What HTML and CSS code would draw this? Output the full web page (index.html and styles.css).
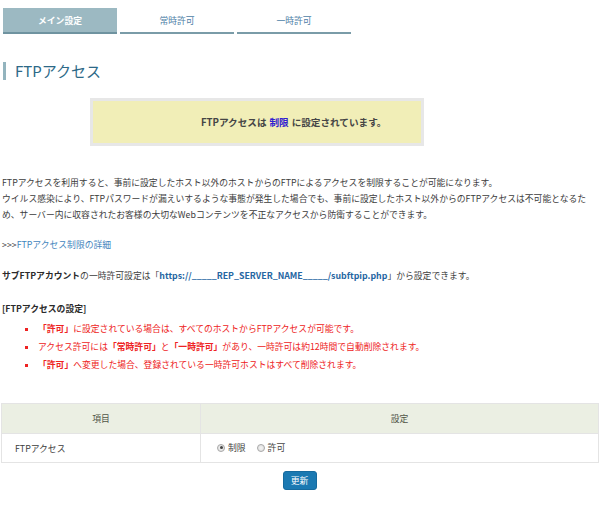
FILE: index.html
```html
<!DOCTYPE html>
<html lang="ja">
<head>
<meta charset="utf-8">
<title>FTPアクセス</title>
<link rel="stylesheet" href="styles.css">
</head>
<body>
<div class="page">
  <nav class="tabs">
    <a class="tab active">メイン設定</a>
    <a class="tab">常時許可</a>
    <a class="tab">一時許可</a>
  </nav>

  <h1 class="title">FTPアクセス</h1>

  <div class="notice">FTPアクセスは <span class="state">制限</span> に設定されています。</div>

  <p class="desc">FTPアクセスを利用すると、事前に設定したホスト以外のホストからのFTPによるアクセスを制限することが可能になります。<br>ウイルス感染により、FTPパスワードが漏えいするような事態が発生した場合でも、事前に設定したホスト以外からのFTPアクセスは不可能となるため、サーバー内に収容されたお客様の大切なWebコンテンツを不正なアクセスから防衛することができます。</p>

  <p class="more">&gt;&gt;&gt;<a class="link">FTPアクセス制限の詳細</a></p>

  <p class="sub"><b>サブFTPアカウント</b>の一時許可設定は「<b class="url">https://_____REP_SERVER_NAME_____/subftpip.php</b>」から設定できます。</p>

  <p class="sec">[FTPアクセスの設定]</p>
  <ul class="notes">
    <li><b>「許可」</b>に設定されている場合は、すべてのホストからFTPアクセスが可能です。</li>
    <li>アクセス許可には<b>「常時許可」</b>と<b>「一時許可」</b>があり、一時許可は約12時間で自動削除されます。</li>
    <li><b>「許可」</b>へ変更した場合、登録されている一時許可ホストはすべて削除されます。</li>
  </ul>

  <table class="form">
    <colgroup><col class="c1"><col class="c2"></colgroup>
    <thead>
      <tr><th>項目</th><th>設定</th></tr>
    </thead>
    <tbody>
      <tr>
        <td class="name">FTPアクセス</td>
        <td class="opts">
          <label class="opt"><input type="radio" name="ftp" checked>制限</label>
          <label class="opt"><input type="radio" name="ftp">許可</label>
        </td>
      </tr>
    </tbody>
  </table>

  <div class="actions"><button class="btn" type="button">更新</button></div>
</div>
</body>
</html>
```

FILE: styles.css
```css
html, body {
  margin: 0;
  padding: 0;
  background: #ffffff;
}
body {
  font-family: "Noto Sans CJK JP", "Noto Sans", sans-serif;
  font-size: 8.8px;
  color: #3c3c3c;
}
.page {
  padding: 8px 2px 0 2px;
}

/* tabs */
.tabs {
  display: flex;
  gap: 3px;
  margin-left: 1px;
}
.tab {
  width: 114px;
  height: 24px;
  box-sizing: content-box;
  border-bottom: 2px solid #7a9ca8;
  display: flex;
  align-items: center;
  justify-content: center;
  color: #4d7ea6;
  font-size: 8.8px;
}
.tab.active {
  background: #9cb9c2;
  color: #ffffff;
  font-weight: bold;
  border-bottom-color: #6f93a0;
}

/* heading */
.title {
  margin: 28px 0 0 1px;
  padding-left: 9px;
  border-left: 3px solid #93b4be;
  font-size: 15px;
  font-weight: normal;
  line-height: 18px;
  color: #2d6987;
  height: 18px;
  display: flex;
  align-items: center;
}

/* notice */
.notice {
  margin: 18px 0 0 88px;
  width: 220px;
  height: 42px;
  padding-left: 108px;
  box-sizing: content-box;
  background: #f1eeb7;
  border: 3px solid #e7e7e7;
  display: flex;
  align-items: center;
  font-size: 9.6px;
  font-weight: bold;
  color: #454545;
}
.state {
  color: #3020d0;
  margin: 0 3px;
}

/* text blocks */
.desc {
  margin: 29px 0 0 0;
  line-height: 16px;
}
.more {
  margin: 14px 0 0 0;
  line-height: 16px;
}
.link {
  color: #3f85bd;
}
.sub {
  margin: 15px 0 0 0;
  line-height: 16px;
}
.sub b {
  color: #2a2a2a;
}
.sub .url {
  color: #2566a2;
}
.sec {
  margin: 17px 0 0 0;
  line-height: 16px;
  font-weight: bold;
  color: #2a2a2a;
}
.notes {
  margin: 3px 0 0 0;
  padding: 0 0 0 36px;
  list-style: square;
  color: #ee2222;
}
.notes li {
  line-height: 18px;
}
.notes li::marker {
  font-size: 9px;
}

/* table */
.form {
  margin: 29px 0 0 -1px;
  width: 598px;
  table-layout: fixed;
  border-collapse: collapse;
  font-size: 8.8px;
}
.form col.c1 {
  width: 199px;
}
.form th, .form td {
  border: 1px solid #e4e4e4;
}
.form th {
  background: #ebefe3;
  height: 29px;
  font-weight: normal;
  color: #4f5446;
  padding: 0;
}
.form td {
  height: 28px;
  padding: 0;
}
.form td.name {
  padding-left: 13px;
}
.form td.opts {
  padding-left: 16px;
}
.opt {
  display: inline-flex;
  align-items: center;
  margin-right: 9px;
  color: #444;
}
.opt input {
  appearance: none;
  -webkit-appearance: none;
  width: 8px;
  height: 8px;
  margin: 0 3px 0 0;
  border: 1px solid #a9a9a9;
  border-radius: 50%;
  background: radial-gradient(circle, #f4f4f4 0%, #dcdcdc 100%);
  position: relative;
  box-sizing: border-box;
}
.opt input:checked::after {
  content: "";
  position: absolute;
  left: 1.5px;
  top: 1.5px;
  width: 3px;
  height: 3px;
  border-radius: 50%;
  background: #444;
}

/* button */
.actions {
  display: flex;
  justify-content: center;
  margin-top: 8px;
}
.btn {
  width: 34px;
  height: 19px;
  background: #1b79b2;
  color: #ffffff;
  border: 1px solid #166a9e;
  border-radius: 3px;
  font-family: "Noto Sans CJK JP", sans-serif;
  font-size: 8.8px;
  padding: 0;
  margin-left: -1px;
}
```
